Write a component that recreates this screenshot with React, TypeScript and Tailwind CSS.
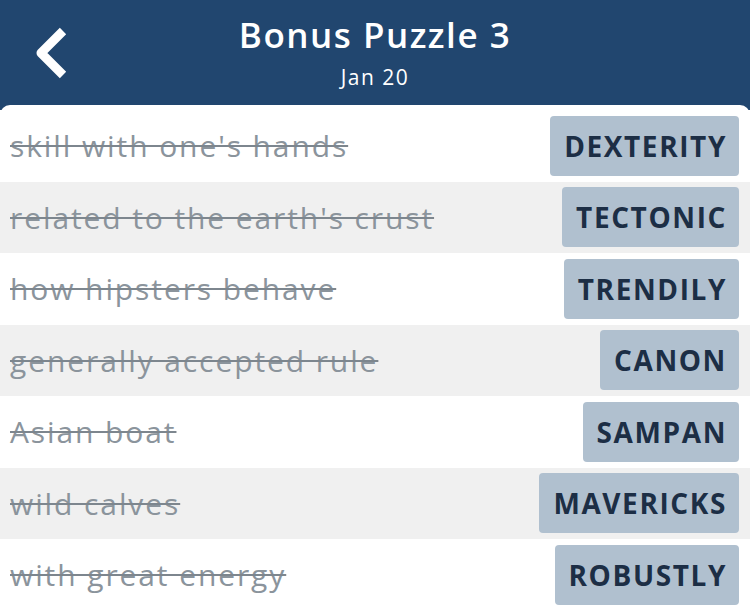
const clues = [
	{ clue: "skill with one's hands", answer: 'DEXTERITY' },
	{ clue: "related to the earth's crust", answer: 'TECTONIC' },
	{ clue: 'how hipsters behave', answer: 'TRENDILY' },
	{ clue: 'generally accepted rule', answer: 'CANON' },
	{ clue: 'Asian boat', answer: 'SAMPAN' },
	{ clue: 'wild calves', answer: 'MAVERICKS' },
	{ clue: 'with great energy', answer: 'ROBUSTLY' },
];

export default function App() {
	return (
		<div
			className="w-[750px] h-[610px] overflow-hidden bg-[#21466f]"
			style={{ fontFamily: '"Open Sans", "Noto Sans", sans-serif' }}>
			<div className="relative h-[105px] flex flex-col items-center text-white">
				<svg
					className="absolute left-[30px] top-[20px]"
					width="48"
					height="66"
					viewBox="0 0 48 66">
					<polyline
						points="33,11 11,33 33,55"
						fill="none"
						stroke="white"
						strokeWidth="9"
						strokeLinejoin="round"
					/>
				</svg>
				<h1 className="mt-[11px] text-[35px] leading-[48px] font-semibold tracking-[1.5px]">
					Bonus Puzzle 3
				</h1>
				<p className="mt-[4px] text-[21px] leading-[28px] tracking-[1.5px]">Jan 20</p>
			</div>
			<div className="bg-white rounded-t-[10px] pt-[5px] h-[505px]">
				{clues.map((c, i) => (
					<div
						key={c.answer}
						className={`h-[71.5px] flex items-center justify-between pl-[10px] pr-[11px] ${
							i % 2 === 1 ? 'bg-[#f0f0f0]' : 'bg-white'
						}`}>
						<span className="text-[30px] tracking-[1.9px] text-[#8b949c] line-through decoration-[2px] decoration-[#7d868e]">
							{c.clue}
						</span>
						<span className="h-[60px] flex items-center pl-[14px] pr-[12px] rounded-[4px] bg-[#b0c0cf] text-[#1c2e45] text-[28px] font-bold tracking-[1.6px]">
							{c.answer}
						</span>
					</div>
				))}
			</div>
		</div>
	);
}
